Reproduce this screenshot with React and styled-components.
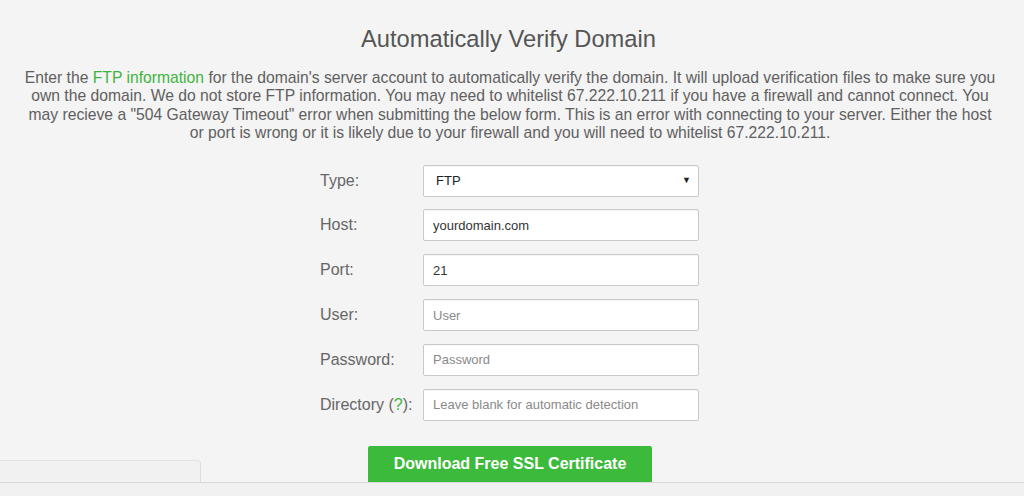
import React from "react";
import styled, { createGlobalStyle } from "styled-components";

const Global = createGlobalStyle`
  html, body { margin: 0; padding: 0; background: #f4f4f4; }
  body { font-family: "Liberation Sans", Arial, sans-serif; overflow: hidden; }
  * { box-sizing: border-box; }
`;

const Page = styled.div`
  width: 1024px;
  height: 496px;
  display: flex;
  flex-direction: column;
  background: #f4f4f4;
`;

const Content = styled.main`
  position: relative;
  height: 482px;
  overflow: hidden;
  padding: 25px 26px 0 22px;
  display: flex;
  flex-direction: column;
  align-items: center;
`;

const Title = styled.h2`
  margin: 0 3px 0 0;
  font-size: 23.7px;
  font-weight: 400;
  color: #555;
  line-height: 28px;
`;

const Intro = styled.p`
  margin: 16px 0 0;
  font-size: 15.7px;
  line-height: 18.4px;
  color: #606060;
  text-align: center;
`;

const Link = styled.a`
  color: #3db53d;
  text-decoration: none;
`;

const Form = styled.form`
  margin-top: 22px;
  margin-right: 1px;
  display: grid;
  grid-template-columns: 103px 276px;
  row-gap: 12.8px;
  align-items: center;
`;

const Label = styled.label`
  font-size: 16px;
  color: #666;
`;

const Help = styled.span`
  color: #3db53d;
`;

const FieldBase = `
  width: 276px;
  height: 32px;
  border: 1px solid #c9c9c9;
  border-radius: 2px;
  background: #fff;
  font-family: "Liberation Sans", Arial, sans-serif;
  font-size: 13px;
  color: #333;
  outline: none;
  box-shadow: inset 0 1px 1px rgba(0,0,0,0.04);
`;

const Input = styled.input`
  ${FieldBase}
  padding: 0 9px;
  &::placeholder { color: #8a8a8a; }
`;

const SelectWrap = styled.div`
  position: relative;
  width: 276px;
`;

const Select = styled.select`
  ${FieldBase}
  appearance: none;
  -webkit-appearance: none;
  padding: 0 12px;
  color: #222;
`;

const Arrow = styled.span`
  position: absolute;
  right: 8px;
  top: 10px;
  font-size: 9px;
  color: #222;
  pointer-events: none;
`;

const Button = styled.button`
  margin-top: 25px;
  width: 284px;
  height: 38px;
  border: none;
  border-radius: 2px;
  background: #3bba3b;
  color: #fff;
  font-family: "Liberation Sans", Arial, sans-serif;
  font-size: 16px;
  font-weight: 700;
  padding: 0 0 2px;
  flex-shrink: 0;
`;

const Tab = styled.div`
  position: absolute;
  left: 0;
  bottom: 0;
  width: 201px;
  height: 22px;
  background: #f1f1f1;
  border-top: 1px solid #e2e2e2;
  border-right: 1px solid #dedede;
  border-top-right-radius: 4px;
`;

const Footer = styled.footer`
  flex: 1;
  background: #f1f1f1;
  border-top: 1px solid #d9d9d9;
`;

export default function App() {
  return (
    <>
      <Global />
      <Page>
        <Content>
          <Title>Automatically Verify Domain</Title>
          <Intro>
            Enter the <Link href="#">FTP information</Link> for the domain's server account to automatically verify the domain. It will upload verification files to make sure you own the domain. We do not store FTP information. You may need to whitelist 67.222.10.211 if you have a firewall and cannot connect. You may recieve a "504 Gateway Timeout" error when submitting the below form. This is an error with connecting to your server. Either the host or port is wrong or it is likely due to your firewall and you will need to whitelist 67.222.10.211.
          </Intro>
          <Form>
            <Label>Type:</Label>
            <SelectWrap>
              <Select defaultValue="FTP">
                <option>FTP</option>
                <option>SFTP</option>
              </Select>
              <Arrow>▼</Arrow>
            </SelectWrap>
            <Label>Host:</Label>
            <Input defaultValue="yourdomain.com" />
            <Label>Port:</Label>
            <Input defaultValue="21" />
            <Label>User:</Label>
            <Input placeholder="User" />
            <Label>Password:</Label>
            <Input placeholder="Password" />
            <Label>
              Directory (<Help>?</Help>):
            </Label>
            <Input placeholder="Leave blank for automatic detection" />
          </Form>
          <Button type="button">Download Free SSL Certificate</Button>
          <Tab />
        </Content>
        <Footer />
      </Page>
    </>
  );
}
